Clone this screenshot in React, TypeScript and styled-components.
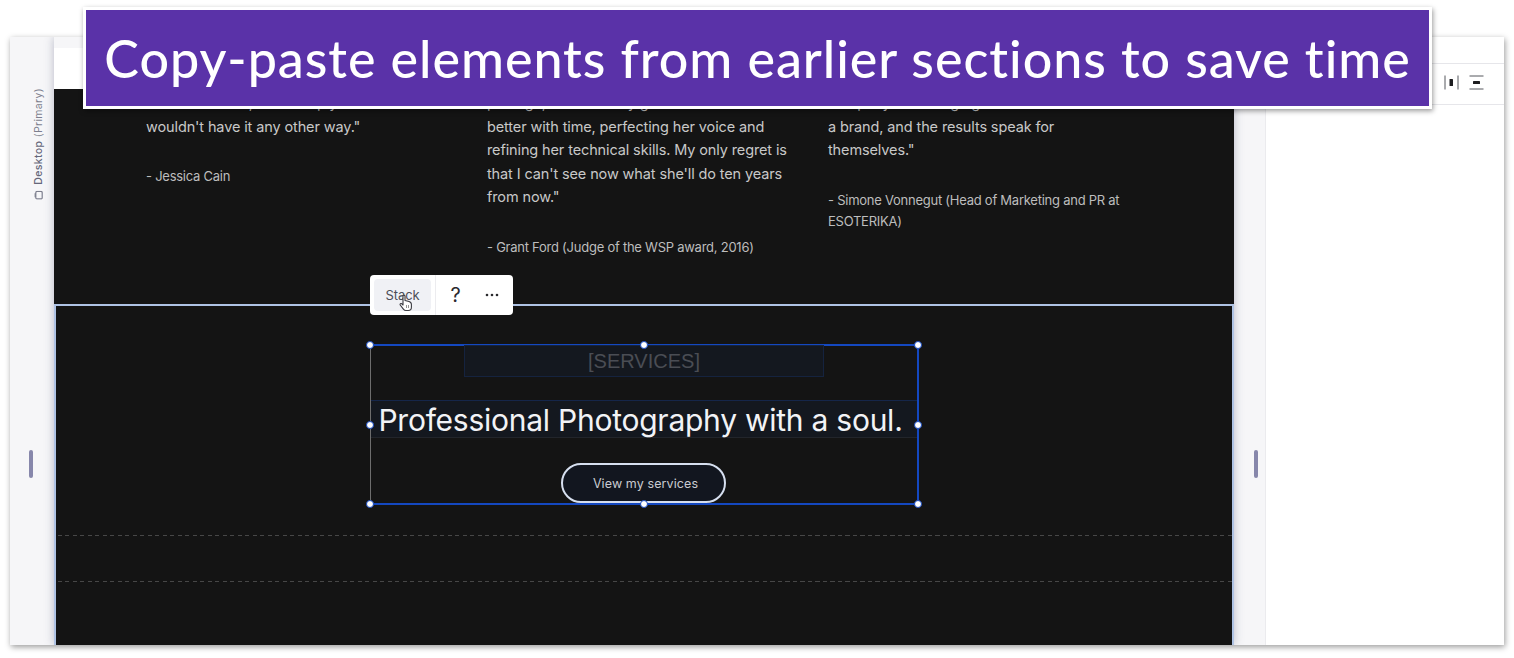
import styled, { createGlobalStyle } from "styled-components";

const GlobalStyle = createGlobalStyle`
  html, body {
    margin: 0;
    background: #ffffff;
    overflow: hidden;
  }
`;

const Page = styled.div`
  position: relative;
  box-sizing: border-box;
  width: 1514px;
  height: 658px;
  padding: 37px 10px 13px;
  font-family: Inter, "Liberation Sans", sans-serif;
`;

const Editor = styled.div`
  display: flex;
  height: 608px;
  background: #f6f6f8;
  box-shadow: 1px 2px 6px rgba(0, 0, 0, 0.4);
  overflow: hidden;
`;

const Rail = styled.div`
  flex: none;
  width: 44px;
  display: flex;
  flex-direction: column;
  align-items: center;
`;

const LeftRail = styled(Rail)`
  padding-top: 51px;
  box-sizing: border-box;
`;

const RailLabel = styled.div`
  display: flex;
  align-items: center;
  gap: 6px;
  writing-mode: vertical-rl;
  transform: rotate(180deg);
  margin-left: 12px;
  font-size: 10.5px;
  letter-spacing: 0.35px;
  color: #7d7f8e;
  white-space: nowrap;
  strong {
    font-weight: 500;
    color: #65677a;
  }
`;

const ResizeHandle = styled.div<{ $top: number }>`
  flex: none;
  width: 4px;
  height: 28px;
  border-radius: 2px;
  background: #8787ab;
  margin-top: ${(p) => p.$top}px;
`;

const LeftHandle = styled(ResizeHandle)`
  margin-right: 2px;
`;

const CanvasColumn = styled.div`
  flex: none;
  width: 1180px;
  padding-top: 11px;
  display: flex;
  flex-direction: column;
  box-shadow: 0 0 9px rgba(70, 75, 110, 0.35);
  z-index: 1;
`;

const CanvasTop = styled.div`
  flex: none;
  height: 41px;
  background: #ffffff;
`;

const Testimonials = styled.section`
  flex: none;
  height: 215px;
  box-sizing: border-box;
  padding: 2px 0 0 92px;
  background: #141414;
  display: grid;
  grid-template-columns: 341px 341px 341px;
  align-content: start;
`;

const Quote = styled.div`
  font-size: 14.5px;
  line-height: 23.5px;
  letter-spacing: -0.12px;
  color: #c8c8c8;
`;

const QuoteLine = styled.div`
  white-space: nowrap;
`;

const Attribution = styled.div`
  margin-top: 28px;
  width: 300px;
  font-size: 13px;
  line-height: 21px;
  letter-spacing: -0.25px;
  color: #bdbdbd;
`;

const StackSection = styled.section`
  flex: 1;
  position: relative;
  box-sizing: border-box;
  padding-top: 38px;
  background: #141414;
  border: solid #afc3e4;
  border-width: 2px 2px 0;
`;

const FloatBar = styled.div`
  position: absolute;
  top: -31px;
  left: 314px;
  box-sizing: border-box;
  width: 143px;
  height: 40px;
  padding: 4px;
  display: flex;
  align-items: center;
  background: #ffffff;
  border-radius: 4px;
`;

const StackTag = styled.div`
  width: 57px;
  height: 32px;
  display: flex;
  align-items: center;
  justify-content: center;
  background: #f0f1f5;
  border-radius: 4px;
  font-size: 13px;
  letter-spacing: -0.1px;
  color: #4c4e57;
`;

const BarDivider = styled.div`
  width: 1px;
  height: 40px;
  margin-left: 4px;
  background: #ececef;
`;

const BarHelp = styled.div`
  width: 39px;
  text-align: center;
  font-size: 20px;
  color: #2a2a2e;
`;

const BarMore = styled.div`
  width: 34px;
  display: flex;
  justify-content: center;
  color: #2a2a2e;
`;

const Cursor = styled.svg`
  position: absolute;
  left: 29px;
  top: 19px;
`;

const Selection = styled.div`
  position: relative;
  box-sizing: border-box;
  width: 549px;
  height: 161px;
  margin-left: 314px;
  border: solid #1448c0;
  border-width: 2px 2px 2px 0;
  display: flex;
  flex-direction: column;
  align-items: center;
  &::before {
    content: "";
    position: absolute;
    left: 0;
    top: 0;
    bottom: 0;
    width: 1px;
    background: #6d6d6d;
  }
`;

const Handle = styled.span<{ $x: number; $y: number }>`
  position: absolute;
  left: calc(${(p) => p.$x}% + ${(p) => p.$x / 100}px);
  top: calc(${(p) => p.$y}% + ${(p) => (p.$y - 50) / 50}px);
  width: 8px;
  height: 8px;
  margin: -4px 0 0 -4px;
  box-sizing: border-box;
  background: #ffffff;
  border: 1.5px solid #1448c0;
  border-radius: 50%;
  z-index: 2;
`;

const ServicesBox = styled.div`
  box-sizing: border-box;
  width: 360px;
  height: 32px;
  margin-top: -1px;
  margin-left: 1px;
  padding-top: 1px;
  display: flex;
  align-items: center;
  justify-content: center;
  background: #14181f;
  border: 1px solid #15233f;
  font-size: 20px;
  color: #4a4d54;
  font-family: "Liberation Sans", sans-serif;
`;

const HeadingBox = styled.div`
  box-sizing: border-box;
  width: 100%;
  height: 38px;
  margin-top: 23px;
  padding: 1px 6px 0 0;
  display: flex;
  align-items: center;
  justify-content: center;
  background: #14181f;
  border-top: 1px solid #15264a;
  border-bottom: 1px solid #22252b;
  font-size: 30px;
  letter-spacing: -0.25px;
  color: #f2f3f6;
  white-space: nowrap;
`;

const ServicesButton = styled.div`
  box-sizing: border-box;
  width: 165px;
  height: 40px;
  margin-top: 25px;
  padding-left: 4px;
  display: flex;
  align-items: center;
  justify-content: center;
  background: #12161f;
  border: 2px solid #d6dfef;
  border-radius: 20px;
  font-size: 12.5px;
  letter-spacing: 0.1px;
  color: #c9cbd1;
`;

const GridLine = styled.div<{ $gap: number }>`
  height: 1px;
  margin: ${(p) => p.$gap}px 0 0 2px;
  background: repeating-linear-gradient(90deg, #474747 0 4px, transparent 4px 7.5px);
`;

const Gutter = styled(Rail)`
  width: 31px;
  box-sizing: border-box;
  padding-left: 12px;
`;

const Panel = styled.aside`
  flex: none;
  width: 239px;
  background: #ffffff;
  border-left: 1px solid #ebebee;
  display: flex;
  flex-direction: column;
`;

const PanelHeader = styled.div`
  flex: none;
  height: 26px;
  border-bottom: 1px solid #e6e6ea;
`;

const PanelTools = styled.div`
  flex: none;
  height: 41px;
  box-sizing: border-box;
  padding: 0 21px 3px 0;
  display: flex;
  align-items: center;
  justify-content: flex-end;
  gap: 10px;
  border-bottom: 1px solid #e6e6ea;
`;

const Banner = styled.h1`
  position: absolute;
  left: 83px;
  top: 7px;
  box-sizing: border-box;
  width: 1349px;
  height: 102px;
  margin: 0;
  display: flex;
  align-items: center;
  justify-content: center;
  background: #5a32a8;
  border: 3px solid #ffffff;
  box-shadow: 1px 2px 5px rgba(0, 0, 0, 0.4);
  font-family: Lato, "Liberation Sans", sans-serif;
  font-size: 52px;
  font-weight: 500;
  letter-spacing: 0.96px;
  color: #ffffff;
  white-space: nowrap;
  z-index: 5;
`;

const columns = [
  {
    lines: ["me feel at ease, and I simply", "wouldn't have it any other way.\""],
    by: "-  Jessica Cain",
  },
  {
    lines: [
      "prestige, and she only gets",
      "better with time, perfecting her voice and",
      "refining her technical skills. My only regret is",
      "that I can't see now what she'll do ten years",
      "from now.\"",
    ],
    by: "- Grant Ford (Judge of the WSP award, 2016)",
  },
  {
    lines: ["company's message gets across as", "a brand, and the results speak for", "themselves.\""],
    by: "- Simone Vonnegut (Head of Marketing and PR at ESOTERIKA)",
  },
];

const handles = [
  [0, 0],
  [50, 0],
  [100, 0],
  [0, 50],
  [100, 50],
  [0, 100],
  [50, 100],
  [100, 100],
];

const App = () => {
  return (
    <>
      <GlobalStyle />
      <Page>
        <Editor>
          <LeftRail>
            <RailLabel>
              <svg width="9" height="9" viewBox="0 0 9 9" fill="none" stroke="#7d7f8e" strokeWidth="1.2">
                <rect x="0.8" y="0.8" width="6.4" height="7.4" rx="1.2" />
                <path d="M7.8 2.5v4" />
              </svg>
              <span>
                <strong>Desktop</strong> (Primary)
              </span>
            </RailLabel>
            <LeftHandle $top={250} />
          </LeftRail>
          <CanvasColumn>
            <CanvasTop />
            <Testimonials>
              {columns.map((col) => (
                <Quote key={col.by}>
                  {col.lines.map((line) => (
                    <QuoteLine key={line}>{line}</QuoteLine>
                  ))}
                  <Attribution>{col.by}</Attribution>
                </Quote>
              ))}
            </Testimonials>
            <StackSection>
              <FloatBar>
                <StackTag>Stack</StackTag>
                <BarDivider />
                <BarHelp>?</BarHelp>
                <BarMore>
                  <svg width="14" height="4" viewBox="0 0 14 4" fill="currentColor">
                    <circle cx="2" cy="2" r="1.3" />
                    <circle cx="7" cy="2" r="1.3" />
                    <circle cx="12" cy="2" r="1.3" />
                  </svg>
                </BarMore>
                <Cursor width="14" height="18" viewBox="0 0 14 18">
                  <path
                    d="M4 1.5c.8-.8 2-.4 2 .8v4.2l4 1c1.4.4 2.4 1.4 2.4 3v2.8c0 1.8-1.2 3.2-3 3.2H7c-1.2 0-2-.6-2.6-1.4L1.2 11c-.6-1 .6-2 1.6-1.2L4 11V2.4z"
                    fill="#ffffff"
                    stroke="#3a3a40"
                    strokeWidth="1.1"
                    strokeLinejoin="round"
                  />
                  <path d="M7.5 11v3M9.5 11v3" stroke="#777" strokeWidth="0.8" />
                </Cursor>
              </FloatBar>
              <Selection>
                {handles.map(([x, y]) => (
                  <Handle key={`${x}-${y}`} $x={x} $y={y} />
                ))}
                <ServicesBox>[SERVICES]</ServicesBox>
                <HeadingBox>Professional Photography with a soul.</HeadingBox>
                <ServicesButton>View my services</ServicesButton>
              </Selection>
              <GridLine $gap={30} />
              <GridLine $gap={45} />
            </StackSection>
          </CanvasColumn>
          <Gutter>
            <ResizeHandle $top={413} />
          </Gutter>
          <Panel>
            <PanelHeader />
            <PanelTools>
              <svg width="15" height="15" viewBox="0 0 15 15" fill="none">
                <path d="M1 0.5v14M14 0.5v14" stroke="#55565c" strokeWidth="1" />
                <rect x="5.5" y="4" width="3.5" height="7" rx="0.6" fill="#1d1d20" />
              </svg>
              <svg width="15" height="15" viewBox="0 0 15 15" fill="none">
                <path d="M0.5 1h14M0.5 14h14" stroke="#55565c" strokeWidth="1" />
                <rect x="4" y="6" width="7" height="3" rx="0.6" fill="#1d1d20" />
              </svg>
            </PanelTools>
          </Panel>
        </Editor>
        <Banner>Copy-paste elements from earlier sections to save time</Banner>
      </Page>
    </>
  );
};

export default App;
